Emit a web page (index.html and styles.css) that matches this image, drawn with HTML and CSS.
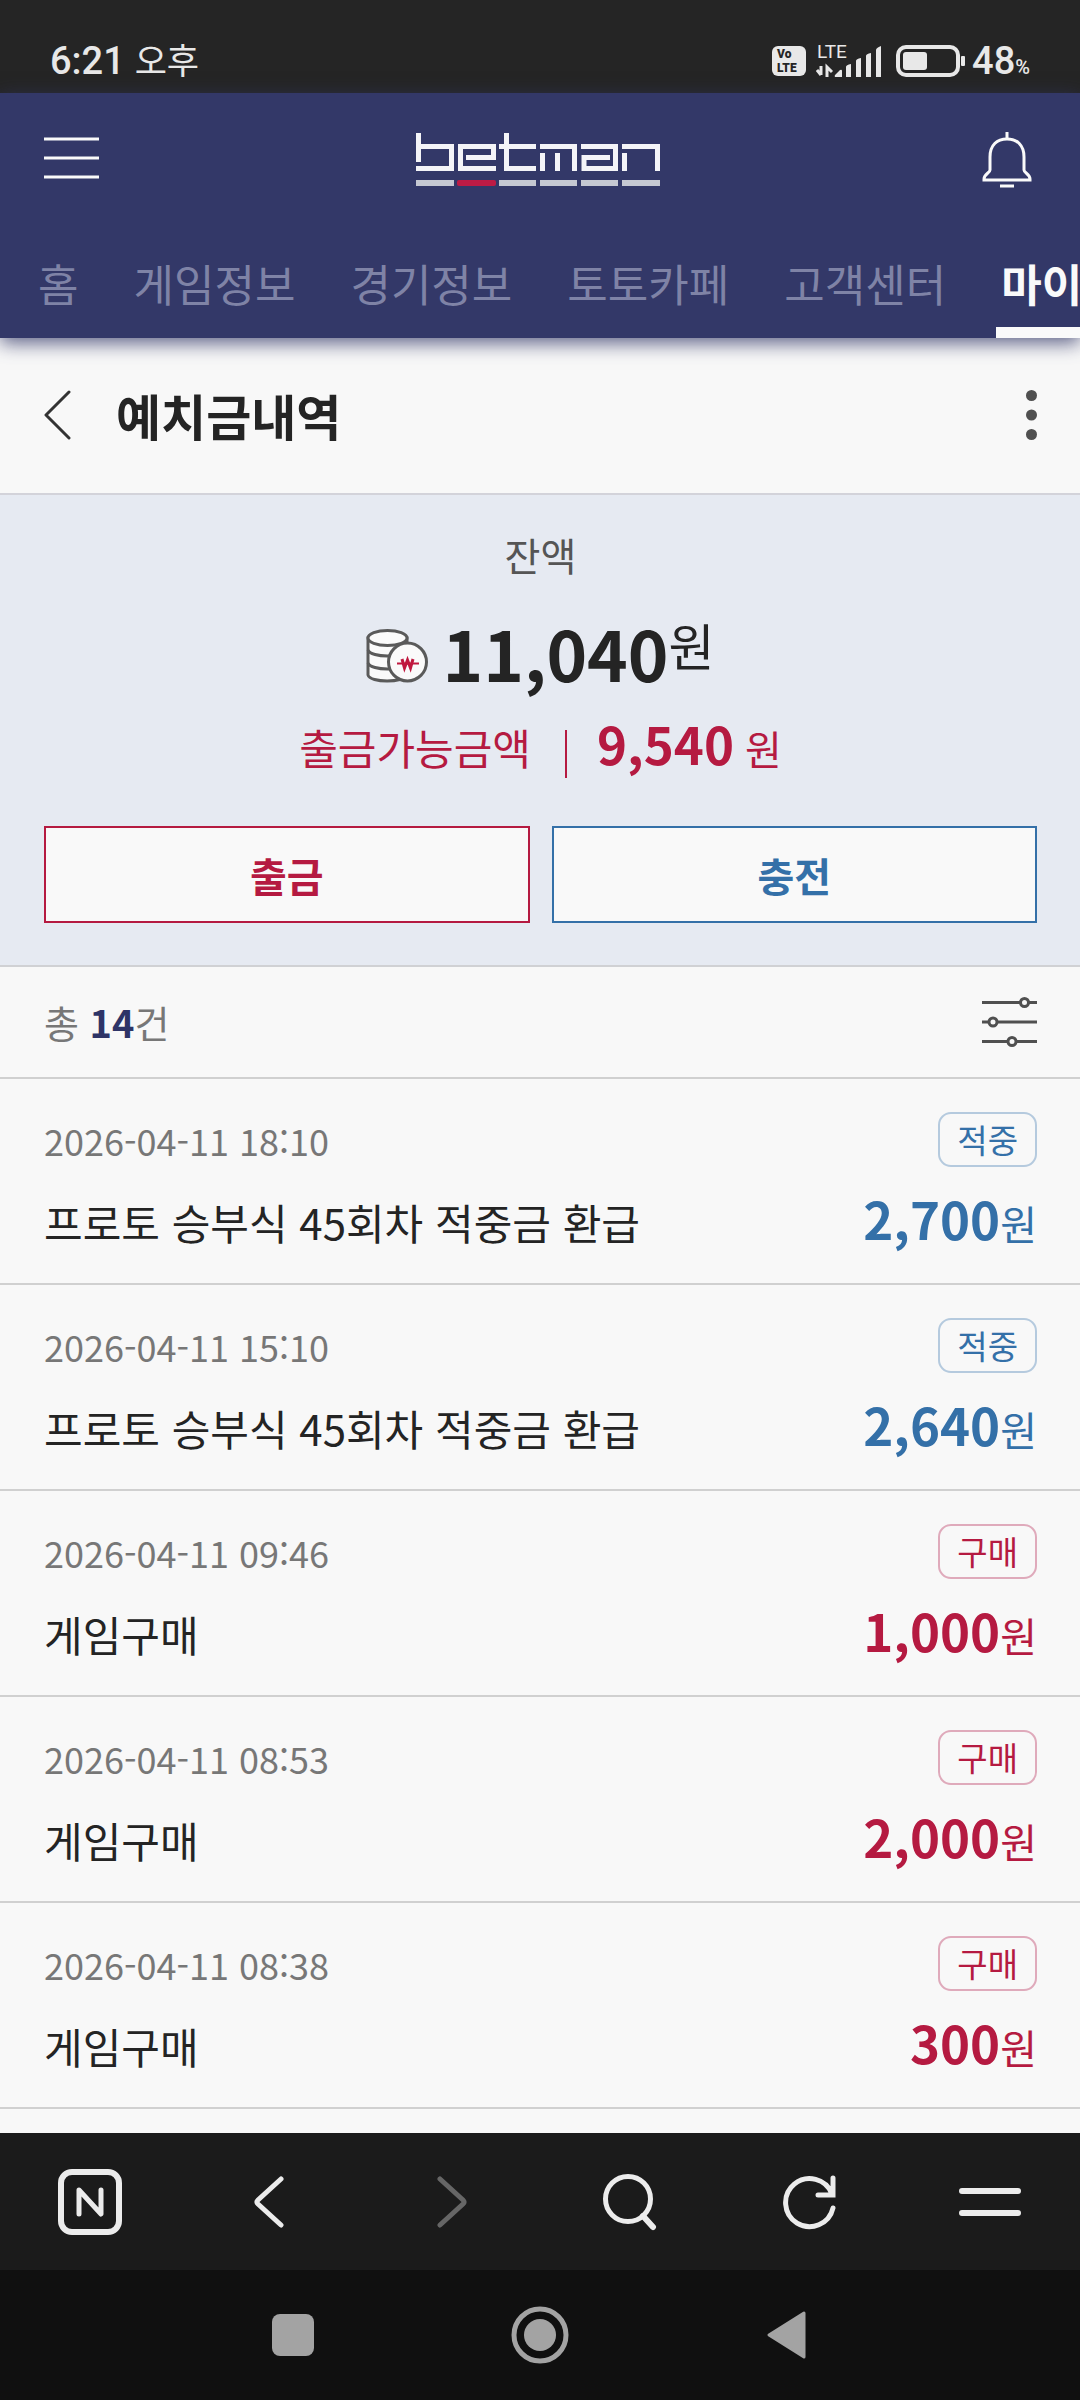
FILE: index.html
```html
<!DOCTYPE html>
<html lang="ko">
<head>
<meta charset="utf-8">
<meta name="viewport" content="width=device-width, initial-scale=1">
<title>예치금내역</title>
<link rel="stylesheet" href="styles.css">
</head>
<body>
<div class="status">
  <div class="status-time"><span class="clock">6:21</span> <span>오후</span></div>
  <div class="status-icons">
    <div class="volte"><span>Vo</span><span>LTE</span></div>
    <svg class="signal" width="66" height="48" viewBox="0 -6 66 48" aria-hidden="true">
      <text class="signal-text" x="1" y="15">LTE</text>
      <path d="M5 23v9M1 27l4 5M11 34V24l5 5" fill="none" stroke="#e8e8e8" stroke-width="3"/>
      <path d="M20 34q-2 0-1-2l5-5q2-1 2 1v6zM30 34V24q0-2 5-3v13zM40 34V18q0-2 5-3v19zM50 34V13q0-2 5-3v24zM60 34V7q0-2 5-4v31z" fill="#e8e8e8"/>
    </svg>
    <svg class="battery" width="70" height="32" viewBox="0 0 70 32" aria-hidden="true">
      <rect x="2" y="2" width="60" height="28" rx="8" fill="none" stroke="#e8e8e8" stroke-width="4"/>
      <rect x="7" y="7" width="24" height="18" rx="3" fill="#e8e8e8"/>
      <rect x="65" y="11" width="4" height="10" rx="1" fill="#e8e8e8"/>
    </svg>
    <div class="percent">48<small>%</small></div>
  </div>
</div>

<header class="header">
  <div class="header-top">
    <button class="icon-button menu" type="button" aria-label="메뉴">
      <svg width="55" height="42" viewBox="0 0 55 42"><path d="M0 2h55M0 21h55M0 40h55" stroke="#fafafa" stroke-width="3"/></svg>
    </button>
    <a class="logo" href="#" aria-label="betman">
      <svg width="244" height="54" viewBox="0 0 244 54">
        <g fill="none" stroke="#f4f4f8" stroke-width="5">
          <path d="M2.500 0v29M3 13.500h32.500v22H0"/>
          <path d="M80 35.500H44.500v-22h33v11H50"/>
          <path d="M90.500 0v35.500H120M83 13.500h37"/>
          <path d="M124 13.500h34.500V38M126.500 20v18M141.500 20v18"/>
          <path d="M165 13.500h34.500v22h-31.500v-11h26"/>
          <path d="M206 13.500h35.500V38M208.500 20v18"/>
        </g>
        <path d="M0 50h38M83 50h37M124 50h37M165 50h37M206 50h38" stroke="#c5c8d2" stroke-width="6"/>
        <rect x="41" y="47" width="39" height="6" rx="2" fill="#bd1b45"/>
      </svg>
    </a>
    <button class="icon-button" type="button" aria-label="알림">
      <svg class="bell" width="50" height="56" viewBox="0 0 50 56"><g fill="none" stroke="#fafafa" stroke-width="3"><path d="M25 0v7M18 54h14"/><path d="M8 38V25C8 13 15 7 25 7s17 6 17 18v13c0 3 6 4 6 9v1H2v-1c0-5 6-6 6-9z"/></g></svg>
    </button>
  </div>
  <nav class="tabs">
    <a href="#">홈</a><a href="#">게임정보</a><a href="#">경기정보</a><a href="#">토토카페</a><a href="#">고객센터</a><a class="active" href="#" aria-current="page">마이</a>
  </nav>
</header>

<main class="main">
  <div class="title-bar">
    <button class="icon-button back" type="button" aria-label="이전">
      <svg width="28" height="50" viewBox="0 0 28 50"><path d="M25 2L2 25l23 23" fill="none" stroke="#333" stroke-width="3" stroke-linecap="round" stroke-linejoin="round"/></svg>
    </button>
    <h1>예치금내역</h1>
    <button class="icon-button" type="button" aria-label="더보기">
      <svg width="11" height="50" viewBox="0 0 11 50"><g fill="#505050"><circle cx="5.500" cy="5.500" r="5.500"/><circle cx="5.500" cy="25" r="5.500"/><circle cx="5.500" cy="44.500" r="5.500"/></g></svg>
    </button>
  </div>

  <section class="balance">
    <h2>잔액</h2>
    <p class="total">
      <svg class="coins" width="62" height="54" viewBox="0 0 62 54" aria-hidden="true">
        <g fill="#fafafa" stroke="#5a5a5a" stroke-width="3">
          <path d="M2 9v37c2 8 36 8 39 0V9z"/>
          <path d="M2 21c3 8 36 8 39 0M2 34c3 8 36 8 39 0" fill="none"/>
          <ellipse cx="21.500" cy="9" rx="19.500" ry="7.500"/>
          <circle cx="41.500" cy="33" r="19"/>
        </g>
        <path d="M36 30l2.500 9 3-8 3 8 2.500-9" fill="none" stroke="#c0183f" stroke-width="3"/>
        <path d="M31 34.500h22" stroke="#c0183f" stroke-width="2"/>
      </svg>
      <strong>11,040</strong><span class="won">원</span>
    </p>
    <p class="available"><span class="available-label">출금가능금액</span><strong>9,540</strong><span class="unit">원</span></p>
    <div class="actions">
      <button class="withdraw" type="button">출금</button>
      <button class="charge" type="button">충전</button>
    </div>
  </section>

  <div class="summary">
    <p>총 <strong>14</strong>건</p>
    <button class="icon-button" type="button" aria-label="필터">
      <svg width="55" height="50" viewBox="0 0 55 50"><g fill="#f8f8f8" stroke="#505050" stroke-width="3"><path d="M0 5.500h55M0 25h55M0 44.500h55"/><circle cx="42.500" cy="5.500" r="4"/><circle cx="11" cy="25" r="4"/><circle cx="30" cy="44.500" r="4"/></g></svg>
    </button>
  </div>

  <ul class="history">
    <li class="win">
      <div class="meta"><time>2026-04-11 18:10</time><span class="badge">적중</span></div>
      <div class="entry"><span>프로토 승부식 45회차 적중금 환급</span><span class="amount"><strong>2,700</strong>원</span></div>
    </li>
    <li class="win">
      <div class="meta"><time>2026-04-11 15:10</time><span class="badge">적중</span></div>
      <div class="entry"><span>프로토 승부식 45회차 적중금 환급</span><span class="amount"><strong>2,640</strong>원</span></div>
    </li>
    <li class="buy">
      <div class="meta"><time>2026-04-11 09:46</time><span class="badge">구매</span></div>
      <div class="entry"><span>게임구매</span><span class="amount"><strong>1,000</strong>원</span></div>
    </li>
    <li class="buy">
      <div class="meta"><time>2026-04-11 08:53</time><span class="badge">구매</span></div>
      <div class="entry"><span>게임구매</span><span class="amount"><strong>2,000</strong>원</span></div>
    </li>
    <li class="buy">
      <div class="meta"><time>2026-04-11 08:38</time><span class="badge">구매</span></div>
      <div class="entry"><span>게임구매</span><span class="amount"><strong>300</strong>원</span></div>
    </li>
  </ul>
</main>

<footer>
  <div class="toolbar">
    <button type="button" aria-label="네이버 홈"><svg width="64" height="66" viewBox="0 0 64 66"><g fill="none" stroke="#ececec" stroke-linecap="round" stroke-linejoin="round"><rect x="3" y="3" width="58" height="60" rx="11" stroke-width="6"/><path d="M21 45V21l22 24V21" stroke-width="5"/></g></svg></button>
    <button type="button" aria-label="뒤로"><svg width="34" height="52" viewBox="0 0 34 52"><path d="M28 3L5 24q-2 2 0 4l23 21" fill="none" stroke="#ececec" stroke-width="5" stroke-linecap="round"/></svg></button>
    <button type="button" aria-label="앞으로"><svg width="34" height="52" viewBox="0 0 34 52"><path d="M7 3l23 21q2 2 0 4L7 49" fill="none" stroke="#666" stroke-width="5" stroke-linecap="round"/></svg></button>
    <button type="button" aria-label="검색"><svg width="56" height="58" viewBox="0 0 56 58"><g fill="none" stroke="#ececec"><circle cx="26" cy="26" r="22.500" stroke-width="5"/><path d="M41 43l10 11" stroke-width="6" stroke-linecap="round"/></g></svg></button>
    <button type="button" aria-label="새로고침"><svg width="54" height="56" viewBox="0 0 54 56"><path d="M50 4v17H35M49 20A24 24 0 1 0 50 34" fill="none" stroke="#ececec" stroke-width="5" stroke-linecap="round"/></svg></button>
    <button type="button" aria-label="메뉴 열기"><svg width="62" height="30" viewBox="0 0 62 30"><path d="M3 4h56M3 26h56" stroke="#ececec" stroke-width="6" stroke-linecap="round"/></svg></button>
  </div>
  <div class="system-nav">
    <button type="button" aria-label="최근 앱"><svg width="42" height="42" viewBox="0 0 42 42"><rect width="42" height="42" rx="8" fill="#a3a3a3"/></svg></button>
    <button type="button" aria-label="홈 화면"><svg width="58" height="58" viewBox="0 0 58 58"><circle cx="29" cy="29" r="26" fill="none" stroke="#a3a3a3" stroke-width="5"/><circle cx="29" cy="29" r="16" fill="#a3a3a3"/></svg></button>
    <button type="button" aria-label="이전 화면"><svg width="40" height="48" viewBox="0 0 40 48"><path d="M2 24L37 2v44z" fill="#a3a3a3" stroke="#a3a3a3" stroke-width="3" stroke-linejoin="round"/></svg></button>
  </div>
</footer>
</body>
</html>
```
FILE: styles.css
```css
* {
  box-sizing: border-box;
  margin: 0;
}

body {
  display: flex;
  flex-direction: column;
  min-height: 100vh;
  overflow-x: hidden;
  background: #f8f8f8;
  color: #242424;
  font-family: "Noto Sans CJK KR", sans-serif;
  font-size: 44px;
  line-height: 60px;
}

button {
  padding: 0;
  border: 0;
  background: none;
  color: inherit;
  font: inherit;
}

svg {
  display: block;
  flex: none;
}

a {
  color: inherit;
  text-decoration: none;
}

/* Status bar */
.status {
  display: flex;
  align-items: flex-end;
  justify-content: space-between;
  height: 93px;
  padding: 0 50px 12px;
  background: #252525;
  color: #e8e8e8;
  font-size: 35px;
  line-height: 40px;
}

.clock,
.percent {
  font-family: Roboto, sans-serif;
  font-size: 38px;
  font-weight: 500;
}

.status-icons {
  display: flex;
  align-items: center;
  height: 40px;
}

.volte {
  display: flex;
  flex-direction: column;
  width: 34px;
  height: 30px;
  margin-right: 10px;
  padding: 1px 0 0 5px;
  border-radius: 6px;
  background: #e8e8e8;
  color: #252525;
  font-family: Roboto, sans-serif;
  font-size: 12px;
  font-weight: 900;
  line-height: 14px;
}

.signal {
  margin-right: 14px;
}

.signal-text {
  fill: #e8e8e8;
  font-family: Roboto, sans-serif;
  font-size: 19px;
}

.battery {
  margin-right: 6px;
}

.percent small {
  font-size: 20px;
  line-height: 20px;
}

/* Site header */
.header {
  background: #333868;
  box-shadow: 0 5px 18px #333868cc;
  color: #fafafa;
}

.header-top {
  display: grid;
  grid-template-columns: 1fr auto 1fr;
  align-items: center;
  height: 134px;
  padding: 0 48px 0 44px;
}

.header-top .icon-button:last-child {
  justify-self: end;
}

.menu {
  justify-self: start;
  padding-bottom: 4px;
}

.tabs {
  display: flex;
  gap: 55px;
  height: 111px;
  padding-left: 38px;
  overflow: hidden;
  color: #7f83a6;
  line-height: 113px;
  white-space: nowrap;
}

.tabs .active {
  flex: 1;
  margin-left: -5px;
  padding-left: 5px;
  border-bottom: 11px solid #fafafa;
  color: #fafafa;
  font-weight: 700;
}

/* Page title */
.main {
  flex: 1;
}

.title-bar {
  display: flex;
  align-items: center;
  height: 157px;
  padding: 0 43px 2px 44px;
  border-bottom: 2px solid #d3d3da;
}

.title-bar h1 {
  flex: 1;
  margin-left: 44px;
  font-size: 49px;
  font-weight: 700;
}

/* Balance */
.balance {
  padding: 29px 43px 42px 44px;
  border-bottom: 2px solid #d0d1d4;
  background: #e6eaf2;
  text-align: center;
}

.balance h2 {
  color: #555;
  font-size: 39px;
  font-weight: 400;
}

.total {
  display: flex;
  justify-content: center;
  align-items: center;
  height: 129px;
  padding-top: 7px;
}

.coins {
  margin-top: 8px;
}

.total strong {
  margin-left: 14px;
  font-size: 69px;
}

.won {
  align-self: flex-start;
  margin-top: 23px;
  font-size: 50px;
}

.available {
  display: flex;
  justify-content: center;
  align-items: baseline;
  color: #b51a41;
  font-size: 42px;
}

.available-label::after {
  content: "";
  display: inline-block;
  width: 2px;
  height: 48px;
  margin: 0 30px 0 34px;
  background: currentColor;
  vertical-align: middle;
}

.available strong {
  margin-right: 11px;
  font-size: 51px;
}

.unit {
  font-size: 40px;
}

.actions {
  display: grid;
  grid-template-columns: 1fr 1fr;
  gap: 22px;
  margin-top: 48px;
}

.actions button {
  height: 97px;
  border: 2px solid;
  background: #f9f9f9;
  font-size: 40px;
  font-weight: 700;
}

.withdraw {
  color: #b51a41;
}

.charge {
  color: #3470a8;
}

/* Result count */
.summary {
  display: flex;
  align-items: center;
  justify-content: space-between;
  height: 112px;
  padding: 0 43px 0 44px;
  border-bottom: 2px solid #d0d0d0;
  color: #777;
  font-size: 38px;
}

.summary strong {
  color: #2e3467;
}

/* Transactions */
.history {
  padding: 0;
  list-style: none;
}

.history li {
  padding: 33px 43px 27px 44px;
  border-bottom: 2px solid #d0d0d0;
}

.meta,
.entry {
  display: flex;
  justify-content: space-between;
}

.meta {
  align-items: center;
  height: 55px;
  color: #777;
  font-size: 36px;
}

.badge {
  height: 55px;
  padding: 0 17px;
  border: 2px solid;
  border-radius: 13px;
  font-size: 33px;
  line-height: 51px;
}

.entry {
  align-items: baseline;
  height: 74px;
  margin-top: 15px;
  font-size: 42px;
  line-height: 72px;
}

.amount {
  font-size: 40px;
}

.amount strong {
  font-size: 51px;
}

.win .amount,
.win .badge {
  color: #3470a8;
}

.win .badge {
  border-color: #b5cade;
}

.buy .amount,
.buy .badge {
  color: #b51a41;
}

.buy .badge {
  border-color: #dfaabb;
}

/* Browser toolbar and system navigation */
.toolbar {
  display: grid;
  grid-template-columns: repeat(6, 1fr);
  height: 137px;
  background: #1b1b1b;
}

.system-nav {
  display: grid;
  grid-template-columns: repeat(3, 1fr);
  height: 130px;
  padding: 0 170px;
  background: #101010;
}

.toolbar button,
.system-nav button {
  display: flex;
  align-items: center;
  justify-content: center;
}
```
